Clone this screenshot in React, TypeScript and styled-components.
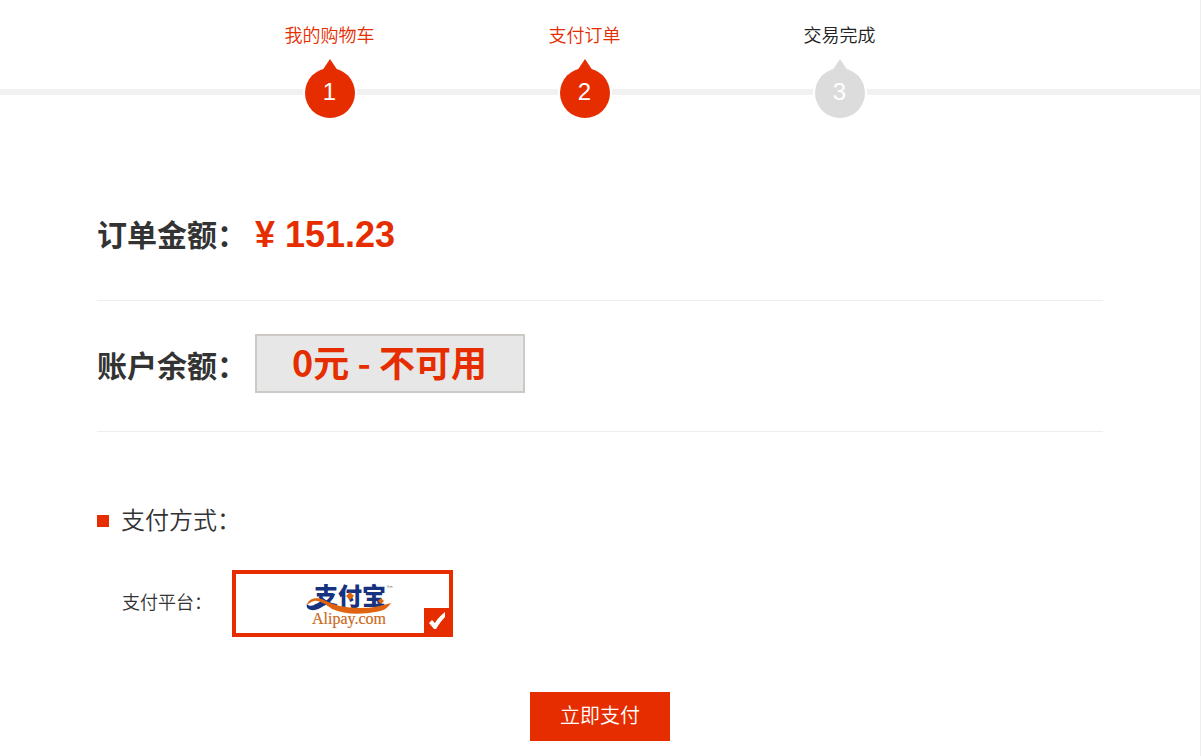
import React from "react";
import styled, { createGlobalStyle } from "styled-components";

const RED = "#e62d00";
const SANS = `"Liberation Sans", "Noto Sans CJK SC", sans-serif`;
const CJK = `"Noto Sans CJK SC", sans-serif`;

const GlobalStyle = createGlobalStyle`
  *, *::before, *::after { box-sizing: border-box; }
  body { margin: 0; background: #fff; color: #333; font-family: ${CJK}; }
`;

const Page = styled.div`
  min-height: 100vh;
  border-right: 1px solid #eee;
`;

const Steps = styled.ol`
  position: relative;
  display: flex;
  justify-content: center;
  margin: 0;
  padding: 21px 31px 52px 0;
  list-style: none;

  &::before {
    content: "";
    position: absolute;
    top: 89px;
    left: 0;
    right: 0;
    height: 6px;
    background: #f1f1f1;
  }
`;

const Step = styled.li<{ $reached: boolean }>`
  position: relative;
  width: 255px;
  display: flex;
  flex-direction: column;
  align-items: center;
  gap: 21px;
  font-size: 18px;
  font-weight: 350;
  line-height: 26px;
  color: ${(p) => (p.$reached ? RED : "#222")};
`;

const Marker = styled.span<{ $reached: boolean }>`
  position: relative;
  width: 50px;
  height: 50px;
  border-radius: 50%;
  background: ${(p) => (p.$reached ? RED : "#dcdcdc")};
  box-shadow: 0 0 0 2px #fff;
  color: #fff;
  font-family: ${SANS};
  font-size: 24px;
  font-weight: 400;
  line-height: 48px;
  text-align: center;

  &::before {
    content: "";
    position: absolute;
    top: -9px;
    left: 17px;
    border: 8px solid transparent;
    border-top: 0;
    border-bottom: 12px solid ${(p) => (p.$reached ? RED : "#dcdcdc")};
  }
`;

const Content = styled.main`
  max-width: 1200px;
  margin: 0 auto;
  padding: 0 97px 15px;
`;

const AmountRow = styled.section`
  display: flex;
  align-items: center;
  gap: 8px;
  padding: 33px 0 38px;
  border-bottom: 1px solid #eee;
`;

const AmountLabel = styled.h2`
  margin: 0;
  font-size: 30px;
  font-weight: 700;
  line-height: 44px;
`;

const Price = styled.strong`
  padding-top: 4px;
  color: ${RED};
  font-family: ${SANS};
  font-size: 36px;
  line-height: 55px;
`;

const Balance = styled.strong`
  padding: 0 36px 4px 35px;
  border: 2px solid #cdcac5;
  background: #e7e7e7;
  color: ${RED};
  font-size: 36px;
  line-height: 51px;
`;

const PayTitle = styled.h3`
  display: flex;
  align-items: center;
  gap: 12px;
  margin: 69px 0 33px;
  font-size: 24px;
  font-weight: 350;
  line-height: 36px;

  &::before {
    content: "";
    width: 12px;
    height: 12px;
    margin-top: 4px;
    background: ${RED};
  }
`;

const PlatformRow = styled.fieldset`
  display: flex;
  align-items: center;
  gap: 20px;
  margin: 0;
  padding: 0 0 0 25px;
  border: 0;
`;

const PlatformLabel = styled.span`
  padding-bottom: 5px;
  font-size: 18px;
  font-weight: 350;
  line-height: 26px;
`;

const Option = styled.label`
  position: relative;
  display: flex;
  justify-content: center;
  width: 221px;
  height: 67px;
  padding: 2px 0 0 12px;
  border: 4px solid #ddd;
  cursor: pointer;

  &:has(input:checked) { border-color: ${RED}; }
  &:has(input:checked) > svg:last-child { display: block; }
`;

const Radio = styled.input`
  position: absolute;
  inset: 0;
  width: 100%;
  height: 100%;
  margin: 0;
  appearance: none;
  cursor: pointer;
`;

const Tick = styled.svg`
  position: absolute;
  right: 0;
  bottom: 0;
  display: none;
  background: ${RED};
`;

const PayButton = styled.button`
  display: block;
  margin: 55px auto 0;
  padding: 0 30px 3px;
  border: 0;
  background: ${RED};
  color: #fff;
  font-family: ${CJK};
  font-size: 20px;
  font-weight: 350;
  line-height: 46px;
  cursor: pointer;
`;

const steps = [
  { label: "我的购物车", reached: true },
  { label: "支付订单", reached: true },
  { label: "交易完成", reached: false },
];

function AlipayLogo() {
  return (
    <svg width="88" height="54" viewBox="0 -4 88 54" aria-hidden="true">
      <text x="9" y="25" fontFamily={CJK} fontSize="24" fontWeight="900" fill="#17337f">
        支付宝
      </text>
      <path
        d="M2 24 C4 27 9 26 13 23 L19 19 L23 22 C18 27 12 31 6 30 C2 29 1 26 2 24Z"
        fill="#17337f"
      />
      <path
        d="M2 25 C3 19 11 16 19 20 C28 25 40 28 56 28 C66 28 76 26 86 23 C82 29 78 31 70 32 C54 35 38 34 27 29 C20 24 14 20 9 21 C6 22 4 23 2 25Z"
        fill="#e06310"
      />
      <path d="M45 12l4 4-4 4-4-4z M76 18l3 3-3 3-3-3z" fill="#e06310" />
      <path d="M82 6h2M83 6v2M85 8v-2l1 1 1-1v2" stroke="#777" strokeWidth="0.5" fill="none" />
      <text
        x="7"
        y="44"
        fontFamily={`"Liberation Serif", serif`}
        fontSize="16"
        fill="#cb6a1e"
        stroke="#cb6a1e"
        strokeWidth="0.2"
      >
        Alipay.com
      </text>
    </svg>
  );
}

export default function App() {
  return (
    <>
      <GlobalStyle />
      <Page>
        <Steps>
          {steps.map((s, i) => (
            <Step key={s.label} $reached={s.reached}>
              {s.label}
              <Marker $reached={s.reached}>{i + 1}</Marker>
            </Step>
          ))}
        </Steps>
        <Content>
          <AmountRow>
            <AmountLabel>订单金额：</AmountLabel>
            <Price>¥ 151.23</Price>
          </AmountRow>
          <AmountRow>
            <AmountLabel>账户余额：</AmountLabel>
            <Balance>0元 - 不可用</Balance>
          </AmountRow>
          <PayTitle>支付方式：</PayTitle>
          <PlatformRow aria-labelledby="platform">
            <PlatformLabel id="platform">支付平台：</PlatformLabel>
            <Option>
              <Radio type="radio" name="platform" value="alipay" aria-label="支付宝" defaultChecked />
              <AlipayLogo />
              <Tick width="25" height="25" viewBox="0 0 25 25" aria-hidden="true">
                <path d="M5 15 L8 12 L11 15 C13 11 17 7 21 4 L21 9 C18 12 15 16 12 21 L10 21Z" fill="#fff" />
              </Tick>
            </Option>
          </PlatformRow>
          <PayButton type="button">立即支付</PayButton>
        </Content>
      </Page>
    </>
  );
}
